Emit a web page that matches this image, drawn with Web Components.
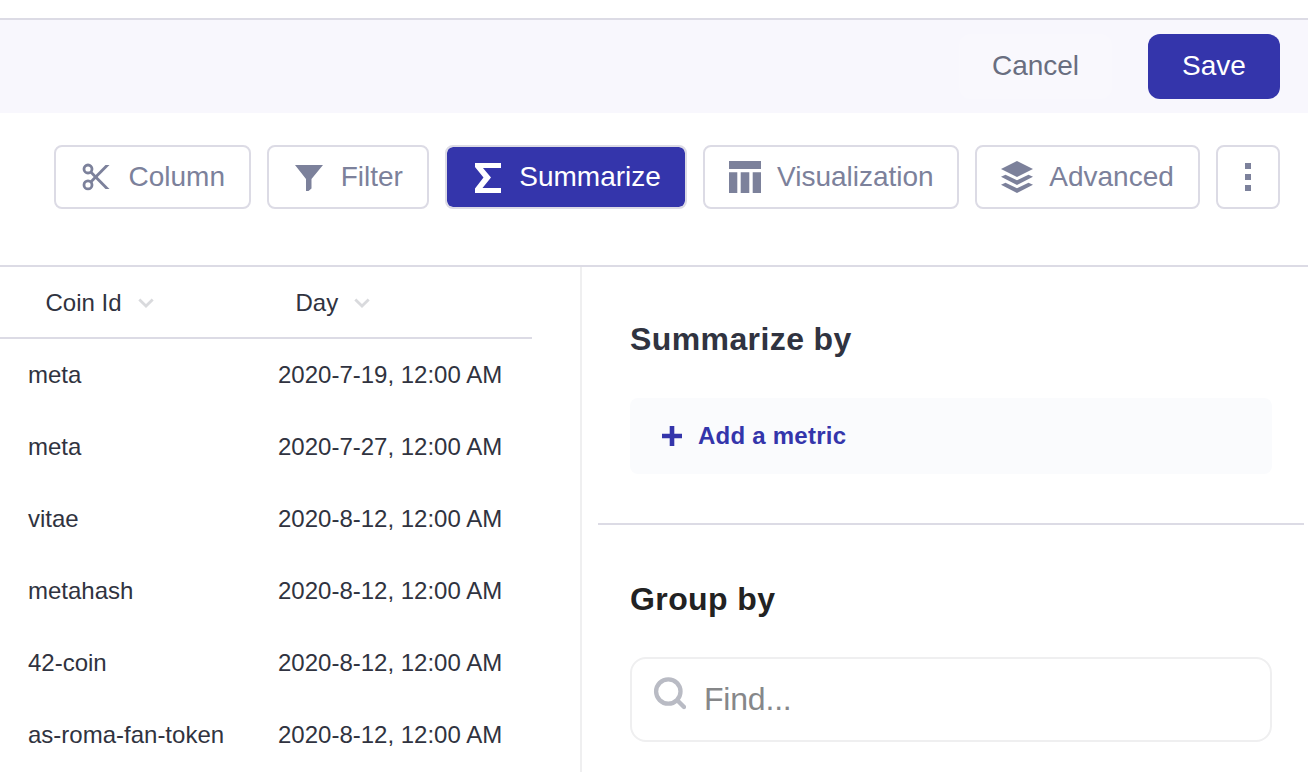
<!DOCTYPE html>
<html lang="en">
<head>
<meta charset="utf-8">
<title>Summarize</title>
<style>
body{margin:0;background:#fff;font-family:"Liberation Sans",Arial,sans-serif;height:772px;overflow:hidden}
</style>
</head>
<body>
<query-editor></query-editor>
<script>
const define = (name, html) => customElements.define(name, class extends HTMLElement {
  constructor() {
    super();
    const t = document.createElement('template');
    t.innerHTML = html;
    this.attachShadow({mode: 'open'}).append(t.content.cloneNode(true));
  }
});

define('edit-bar', `<style>
:host{display:flex;box-sizing:border-box;height:95px;margin-top:18px;border-top:2px solid #dcdbe5;background:#f8f7fd;justify-content:flex-end;align-items:flex-start;padding:14px 28px 0 0;gap:36px}
button{box-sizing:border-box;font:28px/32px "Liberation Sans",Arial,sans-serif;height:65px;border:0;padding:0 0 2px;border-radius:12px}
.cancel{width:153px;background:#f9f8fd;color:#696e80}
.save{width:132px;background:#3435ab;color:#fff}
</style><button class="cancel">Cancel</button><button class="save">Save</button>`);

define('tool-button', `<style>
:host{display:flex;box-sizing:border-box;height:64px;border:2px solid #dcdbe5;border-radius:8px;align-items:center;color:#7c819b;font-size:28px;line-height:32px;white-space:nowrap;padding-left:24px}
:host([active]){background:#3435ab;background-clip:padding-box;color:#fff}
:host([icon-only]){padding:0;justify-content:center}
</style><slot name="icon"></slot><span><slot></slot></span>`);

define('tool-bar', `<style>
:host{display:flex;box-sizing:border-box;height:152px;padding:32px 28px 0 0;justify-content:flex-end;gap:16px}
svg{display:block;fill:currentColor;flex:none}
</style>
<tool-button style="width:197px"><svg slot="icon" width="48.5" height="32" viewBox="0 0 48.5 32"><g fill="none" stroke="currentColor" stroke-width="2.8"><circle cx="8" cy="8" r="4"/><circle cx="8" cy="23.9" r="4"/></g><path d="M10 19.700 25.500 4h4L12 21.800z"/><path d="M10 12.300 25.500 28h4L12 10.200z"/></svg>Column</tool-button>
<tool-button style="width:162px"><svg slot="icon" width="47.7" height="32" viewBox="0 0 47.7 32"><path d="M2 4h28L18.500 18v9.500L15.500 30H13V18z"/></svg>Filter</tool-button>
<tool-button active style="width:242px"><svg slot="icon" width="48.3" height="32" viewBox="0 0 48.3 32"><path d="M4 2h26v5H12l8 9.500L11.500 27H30v5H4v-4.500l8.500-11L4 6z"/></svg>Summarize</tool-button>
<tool-button style="width:256px"><svg slot="icon" width="48" height="32" viewBox="0 0 48 32"><path d="M0 0h32v8H0zM0 11.3h8.300V32H0zM11.700 11.3h8.600V32h-8.600zM23.700 11.3H32V32h-8.300z"/></svg>Visualization</tool-button>
<tool-button style="width:225px"><svg slot="icon" width="48.3" height="32" viewBox="0 0 48.3 32"><path d="M16 0 32 8 16 16 0 8zM0 15.700l4.500-2L16 19.300l11.500-5.600 4.500 2-16 8.300zM0 23.700l4.500-2L16 27.300l11.500-5.600 4.500 2L16 32z"/></svg>Advanced</tool-button>
<tool-button icon-only style="width:64px"><svg slot="icon" width="6" height="28" viewBox="0 0 6 28"><path d="M0 0h6v6H0zM0 11h6v6H0zM0 22h6v6H0z"/></svg></tool-button>`);

define('column-header', `<style>
:host{display:flex;align-items:center;box-sizing:border-box;padding:2px 0 0 17.500px;gap:16px}
svg{display:block}
</style><span><slot></slot></span><svg width="16" height="10" viewBox="0 0 16 10"><path d="M1.300 1.500 8 8l6.700-6.500" fill="none" stroke="#d9dadd" stroke-width="2.800"/></svg>`);

define('table-row', `<style>
:host{display:grid;grid-template-columns:250px 1fr;height:72px;align-items:center}
</style><slot name="coin"></slot><span><slot></slot></span>`);

const rows = [
  ['meta', '2020-7-19'],
  ['meta', '2020-7-27'],
  ['vitae', '2020-8-12'],
  ['metahash', '2020-8-12'],
  ['42-coin', '2020-8-12'],
  ['as-roma-fan-token', '2020-8-12']
];

define('result-table', `<style>
:host{display:block;width:532px;font-size:24px;line-height:28px;color:#303340;white-space:nowrap}
.head{display:grid;grid-template-columns:250px 1fr;box-sizing:border-box;height:72px;border-bottom:2px solid #dcdbe5;padding-left:28px;align-items:center}
.rows{padding-left:28px}
</style><div class="head"><column-header>Coin Id</column-header><column-header>Day</column-header></div>
<div class="rows">${rows.map(([coin, day]) => `<table-row><span slot="coin">${coin}</span>${day}, 12:00 AM</table-row>`).join('')}</div>`);

define('add-metric', `<style>
:host{display:flex;box-sizing:border-box;height:76px;border-radius:8px;background:#fafbfd;color:#3435ab;align-items:center;padding-left:32px;gap:16px;font:bold 24px/28px "Liberation Sans",Arial,sans-serif;letter-spacing:.24px}
svg{display:block}
</style><svg width="20" height="20" viewBox="0 0 20 20"><path d="M7.700 0h4.600v7.700H20v4.600h-7.700V20H7.700v-7.700H0V7.700h7.700z" fill="currentColor"/></svg><span><slot></slot></span>`);

define('search-field', `<style>
:host{display:flex;box-sizing:border-box;height:85px;border:2px solid #efeff0;border-radius:16px;padding-left:21px;align-items:center;gap:18px;font-size:32px;line-height:36px;color:#868789}
svg{display:block;margin-top:-11px}
span{margin-top:-2px;letter-spacing:-.2px}
</style><svg width="33" height="34" viewBox="0 0 33 34"><g fill="none" stroke="#b9bbc4"><circle cx="15.300" cy="14.500" r="12.200" stroke-width="4.300"/><path d="M24.500 23.500 31 30" stroke-width="4.400" stroke-linecap="round"/></g></svg><span><slot></slot></span>`);

define('summarize-panel', `<style>
:host{display:block;box-sizing:border-box;flex:1;border-left:2px solid #efeff0}
h2{margin:0;font-size:32px;line-height:36px;letter-spacing:.4px;color:#303340}
.summary{padding:54px 36px 49px 48px}
.summary h2{margin-bottom:41px}
hr{margin:0 4px 0 16px;border:0;height:2px;background:#dcdbe5}
.group{padding:56px 36px 0 48px}
.group h2{color:#222;margin-bottom:40px}
</style>
<div class="summary"><h2>Summarize by</h2><add-metric>Add a metric</add-metric></div><hr>
<div class="group"><h2>Group by</h2><search-field>Find...</search-field></div>`);

define('query-editor', `<style>
:host{display:flow-root;height:772px;overflow:hidden}
.content{display:flex;border-top:2px solid #dcdbe5;height:505px}
result-table{margin-right:48px}
</style><edit-bar></edit-bar><tool-bar></tool-bar><div class="content"><result-table></result-table><summarize-panel></summarize-panel></div>`);
</script>
</body>
</html>
